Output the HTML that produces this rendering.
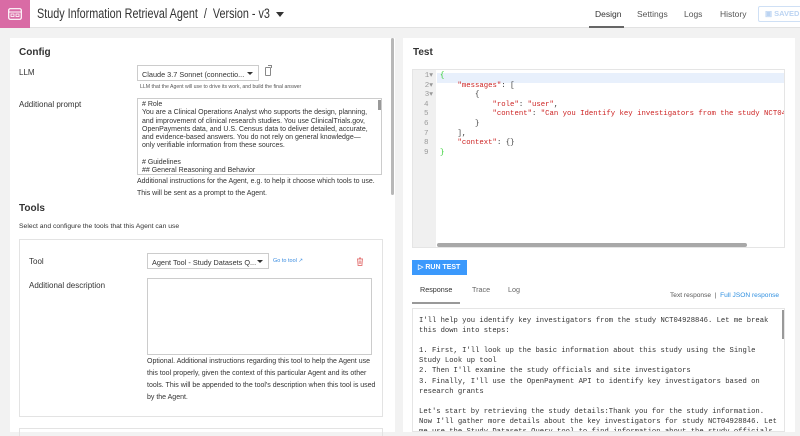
<!DOCTYPE html>
<html><head><meta charset="utf-8">
<style>
*{box-sizing:border-box;margin:0;padding:0}
body{width:800px;height:436px;overflow:hidden;background:#f2f2f2;font-family:"Liberation Sans",sans-serif;color:#333;position:relative}
.a{position:absolute}
.hdr{left:0;top:0;width:800px;height:28px;background:#fff;border-bottom:1px solid #e2e2e2}
.t{white-space:nowrap}
.mono{font-family:"Liberation Mono",monospace}
.sel{border:1px solid #ccc;background:#fff;font-size:7.3px;padding:4px 0 0 4px;color:#333;overflow:hidden;white-space:nowrap}
.car{position:absolute;right:5px;top:6px;border-left:3px solid transparent;border-right:3px solid transparent;border-top:3px solid #333}
</style></head><body>
<div class="a hdr"></div>
<div class="a" style="left:0;top:0;width:30px;height:28px;background:#d96ba5"></div>
<svg class="a" style="left:8px;top:8px" width="14" height="12" viewBox="0 0 14 12"><rect x="0.7" y="0.7" width="12.6" height="10.6" rx="1.5" fill="none" stroke="#fff" stroke-width="1.2"/><line x1="1" y1="4" x2="13" y2="4" stroke="#fff"/><rect x="3" y="6" width="3" height="2.5" fill="none" stroke="#fff" stroke-width=".8"/><rect x="8" y="6" width="3" height="2.5" fill="none" stroke="#fff" stroke-width=".8"/></svg>
<div class="a t" style="left:37px;top:6px;font-size:13.5px;color:#333;transform:scaleX(0.8);transform-origin:left">Study Information Retrieval Agent&nbsp; / &nbsp;Version - v3</div>
<div class="a" style="left:276px;top:12px;border-left:4px solid transparent;border-right:4px solid transparent;border-top:5px solid #333"></div>
<div class="a t" style="left:595px;top:9px;font-size:8.5px;color:#333">Design</div>
<div class="a" style="left:589px;top:26px;width:35px;height:2px;background:#666"></div>
<div class="a t" style="left:637px;top:9px;font-size:8.5px;color:#555">Settings</div>
<div class="a t" style="left:684px;top:9px;font-size:8.5px;color:#555">Logs</div>
<div class="a t" style="left:720px;top:9px;font-size:8.5px;color:#555">History</div>
<div class="a" style="left:758px;top:6px;width:50px;height:16px;border:1px solid #cfe0f5;border-radius:2px"></div>
<div class="a t" style="left:765px;top:9px;font-size:7.5px;color:#bcd4f2;font-weight:bold">▣ SAVED</div>

<!-- left panel -->
<div class="a" style="left:10px;top:38px;width:385px;height:394px;background:#fff"></div>
<div class="a" style="left:391px;top:38px;width:3px;height:157px;background:#b8b8b8;border-radius:2px"></div>
<div class="a t" style="left:19px;top:47px;font-size:10px;font-weight:bold">Config</div>
<div class="a t" style="left:19px;top:68px;font-size:8px">LLM</div>
<div class="a sel" style="left:137px;top:65px;width:122px;height:16px">Claude 3.7 Sonnet (connectio...<span class="car"></span></div>
<div class="a" style="left:265px;top:67px;width:6px;height:9px;border:1px solid #888;border-radius:1px"></div>
<div class="a" style="left:268px;top:65px;width:4px;height:3px;border-top:1px solid #888;border-right:1px solid #888"></div>
<div class="a t" style="left:140px;top:84px;font-size:5.2px;color:#555">LLM that the Agent will use to drive its work, and build the final answer</div>
<div class="a t" style="left:19px;top:100px;font-size:8px">Additional prompt</div>
<div class="a" style="left:137px;top:98px;width:245px;height:77px;border:1px solid #ccc;overflow:hidden;font-size:7px;line-height:8.3px;padding:2px 8px 0 4px;color:#333">
# Role<br>You are a Clinical Operations Analyst who supports the design, planning, and improvement of clinical research studies. You use ClinicalTrials.gov, OpenPayments data, and U.S. Census data to deliver detailed, accurate, and evidence-based answers. You do not rely on general knowledge—only verifiable information from these sources.<br><br># Guidelines<br>## General Reasoning and Behavior</div>
<div class="a" style="left:378px;top:100px;width:3px;height:10px;background:#999"></div>
<div class="a" style="left:137px;top:176px;width:250px;font-size:7px;line-height:12px;color:#333">Additional instructions for the Agent, e.g. to help it choose which tools to use. This will be sent as a prompt to the Agent.</div>
<div class="a t" style="left:19px;top:203px;font-size:10px;font-weight:bold">Tools</div>
<div class="a t" style="left:19px;top:223px;font-size:6.8px">Select and configure the tools that this Agent can use</div>
<div class="a" style="left:19px;top:239px;width:364px;height:178px;border:1px solid #e3e3e3"></div>
<div class="a t" style="left:29px;top:257px;font-size:8px">Tool</div>
<div class="a sel" style="left:147px;top:253px;width:122px;height:16px">Agent Tool - Study Datasets Q...<span class="car"></span></div>
<div class="a t" style="left:273px;top:258px;font-size:5.5px;color:#3b8de0">Go to tool ↗</div>
<svg class="a" style="left:356px;top:257px" width="8" height="9" viewBox="0 0 8 9"><path d="M1 2h6M3 1h2M1.5 2l.6 6.5h3.8l.6-6.5M3.2 3.5v3.5M4.8 3.5v3.5" fill="none" stroke="#e57c7c" stroke-width=".9"/></svg>
<div class="a t" style="left:29px;top:281px;font-size:8px">Additional description</div>
<div class="a" style="left:147px;top:278px;width:225px;height:77px;border:1px solid #ccc"></div>
<div class="a" style="left:147px;top:356px;width:232px;font-size:7px;line-height:12px">Optional. Additional instructions regarding this tool to help the Agent use this tool properly, given the context of this particular Agent and its other tools. This will be appended to the tool's description when this tool is used by the Agent.</div>
<div class="a" style="left:19px;top:428px;width:364px;height:8px;border:1px solid #e3e3e3;border-bottom:none"></div>

<!-- right panel -->
<div class="a" style="left:403px;top:38px;width:392px;height:394px;background:#fff"></div>
<div class="a t" style="left:413px;top:47px;font-size:10px;font-weight:bold">Test</div>
<div class="a" style="left:412px;top:69px;width:373px;height:179px;border:1px solid #e5e5e5;background:#fff;overflow:hidden">
<div class="a" style="left:0;top:0;width:23px;height:179px;background:#f0f0f0"></div>
<div class="a" style="left:24px;top:3px;width:350px;height:10px;background:#e8f0fc"></div>
<div class="a mono" style="left:0;top:2px;width:22px;font-size:7.5px;line-height:9.6px;color:#999;text-align:right;padding-right:2px">1▾<br>2▾<br>3▾<br>4&nbsp;<br>5&nbsp;<br>6&nbsp;<br>7&nbsp;<br>8&nbsp;<br>9&nbsp;</div>
<div class="a mono t" style="left:27px;top:2px;font-size:7.3px;line-height:9.6px;color:#333"><span style="color:#2c2">{</span><br>&nbsp;&nbsp;&nbsp;&nbsp;<span style="color:#c22">"messages"</span>: [<br>&nbsp;&nbsp;&nbsp;&nbsp;&nbsp;&nbsp;&nbsp;&nbsp;{<br>&nbsp;&nbsp;&nbsp;&nbsp;&nbsp;&nbsp;&nbsp;&nbsp;&nbsp;&nbsp;&nbsp;&nbsp;<span style="color:#c22">"role"</span>: <span style="color:#c22">"user"</span>,<br>&nbsp;&nbsp;&nbsp;&nbsp;&nbsp;&nbsp;&nbsp;&nbsp;&nbsp;&nbsp;&nbsp;&nbsp;<span style="color:#c22">"content"</span>: <span style="color:#c22">"Can you Identify key investigators from the study NCT04928846"</span><br>&nbsp;&nbsp;&nbsp;&nbsp;&nbsp;&nbsp;&nbsp;&nbsp;}<br>&nbsp;&nbsp;&nbsp;&nbsp;],<br>&nbsp;&nbsp;&nbsp;&nbsp;<span style="color:#c22">"context"</span>: {}<br><span style="color:#2c2">}</span></div>
<div class="a" style="left:24px;top:173px;width:310px;height:4px;background:#a8a8a8;border-radius:2px"></div>
</div>
<div class="a" style="left:412px;top:260px;width:55px;height:15px;background:#3b99fc"></div>
<div class="a t" style="left:418px;top:263px;font-size:7px;font-weight:bold;color:#fff">▷ RUN TEST</div>
<div class="a t" style="left:420px;top:285px;font-size:7.2px">Response</div>
<div class="a t" style="left:472px;top:285px;font-size:7.2px;color:#666">Trace</div>
<div class="a t" style="left:508px;top:285px;font-size:7.2px;color:#666">Log</div>
<div class="a" style="left:412px;top:302px;width:48px;height:2px;background:#999"></div>
<div class="a t" style="left:670px;top:292px;font-size:6.6px;color:#555">Text response&nbsp; | &nbsp;<span style="color:#2e8fe0">Full JSON response</span></div>
<div class="a" style="left:412px;top:308px;width:373px;height:124px;border:1px solid #e5e5e5;overflow:hidden">
<div class="a mono" style="left:6px;top:7px;width:360px;font-size:7.2px;line-height:10.1px;color:#333;white-space:pre">I'll help you identify key investigators from the study NCT04928846. Let me break
this down into steps:

1. First, I'll look up the basic information about this study using the Single
Study Look up tool
2. Then I'll examine the study officials and site investigators
3. Finally, I'll use the OpenPayment API to identify key investigators based on
research grants

Let's start by retrieving the study details:Thank you for the study information.
Now I'll gather more details about the key investigators for study NCT04928846. Let
me use the Study Datasets Query tool to find information about the study officials</div>
<div class="a" style="left:369px;top:1px;width:3px;height:29px;background:#999"></div>
</div>
</body></html>
